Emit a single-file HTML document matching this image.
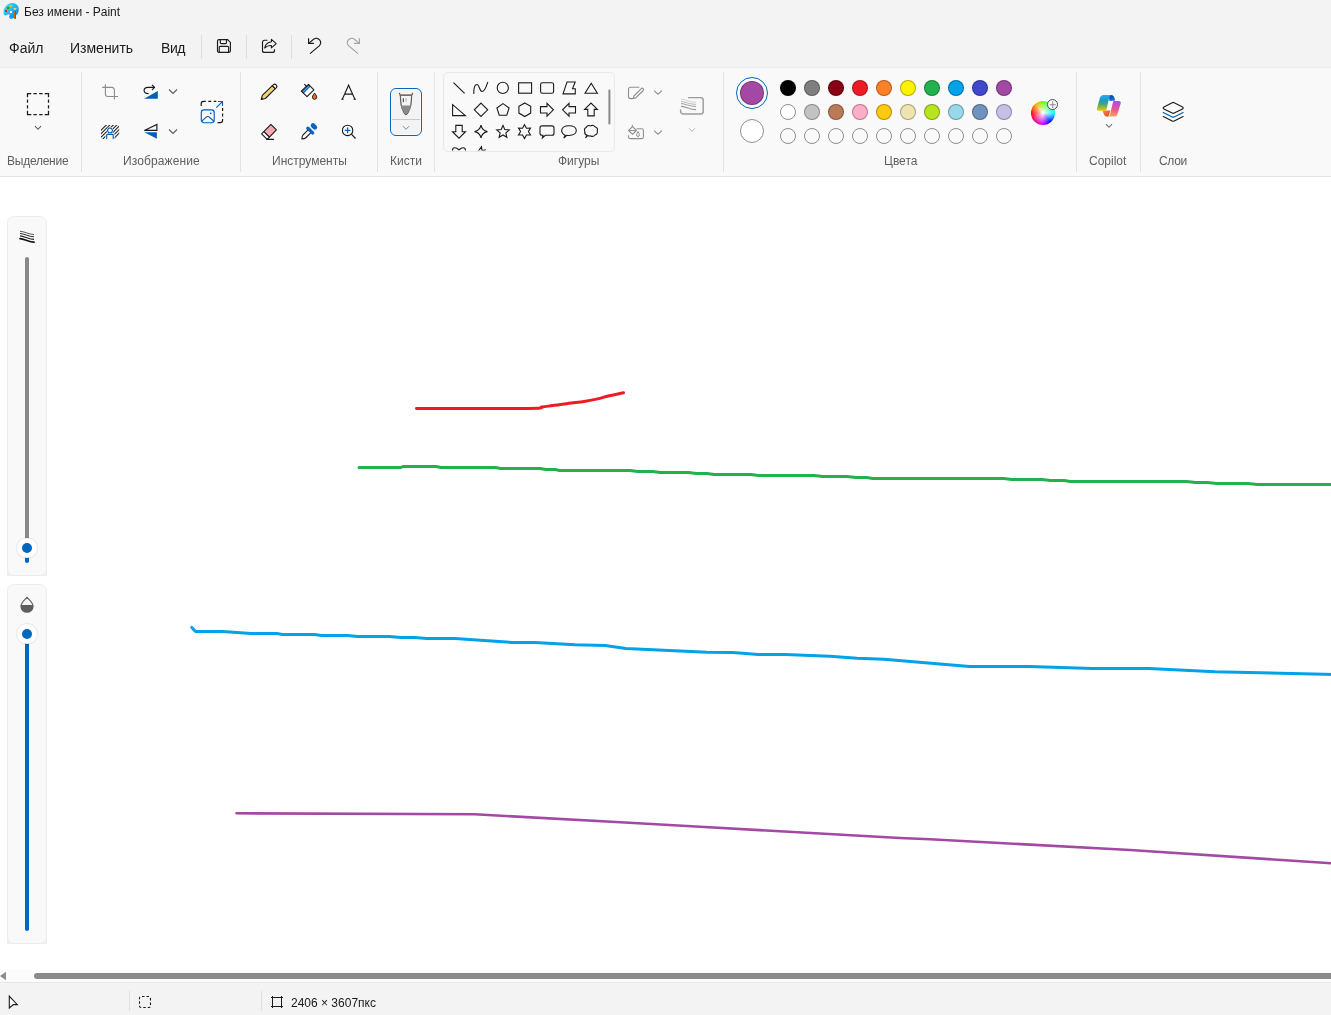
<!DOCTYPE html>
<html><head><meta charset="utf-8">
<style>
*{box-sizing:border-box;margin:0;padding:0}
html,body{width:1331px;height:1015px;overflow:hidden;background:#f3f3f3;font-family:"Liberation Sans",sans-serif;color:#1b1b1b}
.a{position:absolute}
.t{position:absolute;white-space:nowrap;line-height:normal;will-change:transform}
svg{position:absolute;overflow:visible}
.lbl{font-size:12px;color:#5f5f5f}
.sep{position:absolute;width:1px;background:#e3e3e3}
.msep{position:absolute;width:1px;background:#dedede;top:35px;height:24px}
.sw{position:absolute;width:16px;height:16px;border-radius:50%;border:1px solid rgba(0,0,0,0.32)}
</style></head><body>

<!-- title bar -->
<div id="title">
  <span class="t m" style="left:24px;top:5px;font-size:12px;color:#1a1a1a">Без имени - Paint</span>
</div>

<!-- menu bar -->
<div id="menu">
  <span class="t m" style="left:9px;top:40px;font-size:14px">Файл</span>
  <span class="t m" style="left:70px;top:40px;font-size:14px">Изменить</span>
  <span class="t m" style="left:161px;top:40px;font-size:14px;letter-spacing:-0.4px">Вид</span>
  <div class="msep" style="left:201px"></div>
  <div class="msep" style="left:246px"></div>
  <div class="msep" style="left:291px"></div>
</div>


<!-- app icon -->
<svg style="left:0;top:0" width="24" height="22" viewBox="0 0 24 22">
<defs><linearGradient id="pal" x1="0" y1="0" x2="1" y2="1"><stop offset="0" stop-color="#4fe0fb"/><stop offset="0.5" stop-color="#22b8f0"/><stop offset="1" stop-color="#0a72d8"/></linearGradient>
<linearGradient id="brh" x1="0" y1="0" x2="1" y2="0"><stop offset="0" stop-color="#c8741c"/><stop offset="1" stop-color="#8a4a10"/></linearGradient></defs>
<path d="M12,3 C16,3 18.8,5.5 18.8,9.5 C18.8,13 17,14.5 15.5,16 C14,17.5 13,19 11,18.8 C9.2,18.6 8.8,17 9.4,15.5 C9.8,14.5 9,13.8 8,14.5 C6.5,15.8 4.5,16 3.8,14.5 C3,12.5 3.5,9 5.5,6.5 C7.2,4.3 9.5,3 12,3 Z" fill="url(#pal)"/>
<rect x="10" y="5" width="2" height="2" fill="#ffc000"/>
<rect x="7" y="7" width="2" height="2" fill="#1e9a1e"/>
<rect x="5" y="10" width="2" height="2" fill="#f02000"/>
<rect x="10" y="11" width="2" height="2" fill="#fff"/>
<path d="M13,8 L17,8 L15.5,10 L14.5,10 Z" fill="#f3c98f"/>
<rect x="14" y="11" width="2" height="8" rx="0.8" fill="url(#brh)"/>
</svg>
<!-- save -->
<svg style="left:216px;top:38px" width="16" height="16" viewBox="0 0 16 16">
<path d="M3,1.6 H11.6 L14.4,4.4 V12.9 A1.5,1.5 0 0 1 12.9,14.4 H3 A1.5,1.5 0 0 1 1.5,12.9 V3 A1.5,1.5 0 0 1 3,1.6 Z" fill="none" stroke="#1b1b1b" stroke-width="1.15"/>
<path d="M4.3,1.8 V4.6 A1,1 0 0 0 5.3,5.6 H9.5 A1,1 0 0 0 10.5,4.6 V1.8" fill="none" stroke="#1b1b1b" stroke-width="1.15"/>
<path d="M3.2,14.3 V9.3 A1,1 0 0 1 4.2,8.3 H11.6 A1,1 0 0 1 12.6,9.3 V14.3" fill="none" stroke="#1b1b1b" stroke-width="1.15"/>
</svg>
<!-- share -->
<svg style="left:261px;top:38px" width="17" height="16" viewBox="0 0 17 16">
<path d="M6.5,2.2 H3.5 A2,2 0 0 0 1.5,4.2 V12.4 A2,2 0 0 0 3.5,14.4 H11.5 A2,2 0 0 0 13.5,12.4 V11.2" fill="none" stroke="#1b1b1b" stroke-width="1.15"/>
<path d="M10.4,1.3 L15.2,5.6 L10.4,9.9 V7.6 C7.6,7.4 5.3,8.3 3.7,10 C4.1,6.6 6.5,4.3 10.4,3.7 Z" fill="none" stroke="#1b1b1b" stroke-width="1.1" stroke-linejoin="round"/>
</svg>
<!-- undo -->
<svg style="left:306px;top:36px" width="18" height="20" viewBox="0 0 18 20">
<path d="M2.6,2.2 V7.4 H7.9" fill="none" stroke="#1b1b1b" stroke-width="1.15"/>
<path d="M2.9,7.1 L7.6,3.3 C9.6,1.6 12.3,2.1 13.8,4.2 C15.2,6.1 14.9,8.2 13.2,9.9 L4.3,17.4" fill="none" stroke="#1b1b1b" stroke-width="1.15" stroke-linecap="round"/>
</svg>
<!-- redo -->
<svg style="left:346px;top:36px" width="18" height="20" viewBox="0 0 18 20">
<g transform="translate(16,0) scale(-1,1)">
<path d="M2.6,2.2 V7.4 H7.9" fill="none" stroke="#a3a3a3" stroke-width="1.15"/>
<path d="M2.9,7.1 L7.6,3.3 C9.6,1.6 12.3,2.1 13.8,4.2 C15.2,6.1 14.9,8.2 13.2,9.9 L4.3,17.4" fill="none" stroke="#a3a3a3" stroke-width="1.15" stroke-linecap="round"/>
</g>
</svg>

<!-- ribbon -->
<div id="ribbon" class="a" style="left:0;top:67px;width:1331px;height:110px;background:#f9f9f9;border-top:1px solid #ebebeb;border-bottom:1px solid #e5e5e5">
</div>


<!-- selection -->
<svg style="left:26px;top:92px" width="24" height="24" viewBox="0 0 24 24">
<path d="M1.5,5.3 V1.5 H5.3 M7.4,1.5 H10.8 M13.2,1.5 H16.6 M18.7,1.5 H22.5 V5.3 M22.5,7.4 V10.8 M22.5,13.2 V16.6 M22.5,18.7 V22.5 H18.7 M16.6,22.5 H13.2 M10.8,22.5 H7.4 M5.3,22.5 H1.5 V18.7 M1.5,16.6 V13.2 M1.5,10.8 V7.4" fill="none" stroke="#1b1b1b" stroke-width="1.25" stroke-linecap="butt" stroke-linejoin="miter"/>
</svg>
<svg style="left:34px;top:125px" width="8" height="6" viewBox="0 0 8 6"><path d="M1,1.2 L4,4.3 L7,1.2" fill="none" stroke="#5c5c5c" stroke-width="1.1"/></svg>
<!-- crop -->
<svg style="left:101px;top:83px" width="18" height="18" viewBox="0 0 18 18">
<path d="M4.4,1.2 V11 A2.5,2.5 0 0 0 6.9,13.5 H17" fill="none" stroke="#8c8c8c" stroke-width="1.1"/>
<path d="M1.1,4.4 H10.9 A2.5,2.5 0 0 1 13.4,6.9 V16.5" fill="none" stroke="#8c8c8c" stroke-width="1.1"/>
</svg>
<!-- rotate -->
<svg style="left:143px;top:84px" width="17" height="16" viewBox="0 0 17 16">
<path d="M11.6,3.4 H5 C2.7,3.4 1.1,4.8 1.1,6.5 C1.1,8.3 2.7,9.6 5.6,9.6" fill="none" stroke="#1b1b1b" stroke-width="1.15"/>
<path d="M9.3,1.1 L11.6,3.4 L9.3,5.7" fill="none" stroke="#1b1b1b" stroke-width="1.15" stroke-linecap="round" stroke-linejoin="round"/>
<path d="M1,14.8 L14.8,7 V14.8 Z" fill="#005fb8"/>
</svg>
<svg style="left:168px;top:88px" width="10" height="7" viewBox="0 0 10 7"><path d="M1,1.5 L5,5.5 L9,1.5" fill="none" stroke="#5c5c5c" stroke-width="1.1"/></svg>
<!-- flip -->
<svg style="left:143px;top:123px" width="16" height="17" viewBox="0 0 16 17">
<path d="M1.3,7.4 L13.9,1.4 V7.4 Z" fill="none" stroke="#1b1b1b" stroke-width="1.15" stroke-linejoin="miter"/>
<path d="M1.3,9.2 H13.9 V15.8 Z" fill="#005fb8"/>
</svg>
<svg style="left:168px;top:128px" width="10" height="7" viewBox="0 0 10 7"><path d="M1,1.5 L5,5.5 L9,1.5" fill="none" stroke="#5c5c5c" stroke-width="1.1"/></svg>
<!-- remove bg -->
<svg style="left:100px;top:124px" width="20" height="16" viewBox="0 0 20 16">
<defs>
<clipPath id="rbr"><rect x="1" y="1" width="18.2" height="14" rx="2"/></clipPath>
<mask id="rbm" maskUnits="userSpaceOnUse" x="0" y="0" width="20" height="16">
<rect x="0" y="0" width="20" height="16" fill="#fff"/>
<path d="M6.3,6.4 L8,3 H12 L13.7,6.4 L12,9.8 H8 Z" fill="#000"/>
<path d="M5.4,16 V10.9 A1.5,1.5 0 0 1 6.9,9.3 H13.1 A1.5,1.5 0 0 1 14.6,10.9 V16 Z" fill="#000"/>
</mask>
</defs>
<g clip-path="url(#rbr)"><g mask="url(#rbm)">
<path d="M-9.70,17 L7.30,0 M-6.20,17 L10.80,0 M-2.70,17 L14.30,0 M0.80,17 L17.80,0 M4.30,17 L21.30,0 M7.80,17 L24.80,0 M11.30,17 L28.30,0" stroke="#2a2a2a" stroke-width="1.1"/>
</g></g>
<path d="M7.4,6.4 L8.65,4.1 H11.35 L12.6,6.4 L11.35,8.7 H8.65 Z" fill="none" stroke="#005fb8" stroke-width="1.1" stroke-linejoin="round"/>
<path d="M6.7,14.6 V11.3 A0.9,0.9 0 0 1 7.6,10.4 H12.3 A0.9,0.9 0 0 1 13.2,11.3 V14.6" fill="none" stroke="#005fb8" stroke-width="1.1" stroke-linecap="round"/>
</svg>
<!-- resize -->
<svg style="left:200px;top:100px" width="24" height="24" viewBox="0 0 24 24">
<path d="M1.2,6 V3.7 A2.3,2.3 0 0 1 3.5,1.4 H5.8" fill="none" stroke="#1b1b1b" stroke-width="1.2"/>
<path d="M8.3,1.4 H11.3 M13.8,1.4 H16.3" fill="none" stroke="#1b1b1b" stroke-width="1.2"/>
<path d="M22.6,8 V11 M22.6,13.5 V16.5" fill="none" stroke="#1b1b1b" stroke-width="1.2"/>
<path d="M22.6,19 V20.3 A2.3,2.3 0 0 1 20.3,22.6 H17.5" fill="none" stroke="#1b1b1b" stroke-width="1.2"/>
<rect x="1.3" y="9.8" width="12.9" height="12.9" rx="2.6" fill="none" stroke="#005fb8" stroke-width="1.15"/>
<path d="M1.8,21.2 L6,17.3 A2.4,2.4 0 0 1 9.6,17.3 L13.6,21" fill="none" stroke="#005fb8" stroke-width="1.15"/>
<circle cx="10.7" cy="13.3" r="0.9" fill="#005fb8"/>
<path d="M16.4,7.6 L22.4,1.6 M18,1.5 H22.5 V6" fill="none" stroke="#005fb8" stroke-width="1.15"/>
</svg>


<!-- pencil -->
<svg style="left:260px;top:83px" width="18" height="18" viewBox="0 0 18 18">
<path d="M1.3,16.5 L2.3,12.4 L12.3,2.6 L15.3,5.6 L5.4,15.5 Z" fill="#f1cf7e" stroke="#1b1b1b" stroke-width="1.1" stroke-linejoin="round"/>
<path d="M12.3,2.6 L13.2,1.8 A2.1,2.1 0 0 1 16.2,4.8 L15.3,5.6 Z" fill="#fff" stroke="#1b1b1b" stroke-width="1.1" stroke-linejoin="round"/>
<path d="M1.3,16.5 L2.6,15.2" stroke="#1b1b1b" stroke-width="1.6"/>
</svg>
<!-- fill -->
<svg style="left:300px;top:83px" width="19" height="18" viewBox="0 0 19 18">
<path d="M1.5,8.2 L3.5,10.4 L10.6,3.4 L8.5,1.4 Z" fill="#0a63c4"/>
<path d="M2.5,9.3 L9.6,2.4" stroke="#9cc3ee" stroke-width="0.7"/>
<path d="M8.5,1.3 L13.9,6.9 L7,13.6 L1.3,8.2 Z" fill="none" stroke="#1b1b1b" stroke-width="1.1" stroke-linejoin="round"/>
<path d="M4.3,1.2 L6.6,3.5" stroke="#1b1b1b" stroke-width="1.1"/>
<path d="M14.6,10.1 C15.5,11.5 16.8,12.6 16.8,14.1 A2.2,2.2 0 0 1 12.4,14.1 C12.4,12.6 13.7,11.5 14.6,10.1 Z" fill="#f26522" stroke="#1b1b1b" stroke-width="0.9" stroke-linejoin="round"/>
</svg>
<!-- text A -->
<svg style="left:341px;top:84px" width="17" height="17" viewBox="0 0 17 17">
<path d="M1.3,15.3 L7.6,1.2 L13.9,15.3 M3.6,10.1 H11.6" fill="none" stroke="#1b1b1b" stroke-width="1.1" stroke-linejoin="miter"/>
<path d="M0.3,15.3 H2.6 M12.6,15.3 H14.9" stroke="#1b1b1b" stroke-width="1.1"/>
</svg>
<!-- eraser -->
<svg style="left:260px;top:123px" width="18" height="18" viewBox="0 0 18 18">
<path d="M10.9,1.3 L16.4,6.9 L9.4,14.2 L3.8,8.6 Z" fill="#f4aaae" stroke="#1b1b1b" stroke-width="1.1" stroke-linejoin="round"/>
<path d="M3.8,8.6 L9.4,14.2 L7.2,16.4 L1.6,10.8 Z" fill="#fff" stroke="#1b1b1b" stroke-width="1.1" stroke-linejoin="round"/>
<path d="M6.6,16.4 H13.6" stroke="#1b1b1b" stroke-width="1.1" stroke-linecap="round"/>
</svg>
<!-- picker -->
<svg style="left:300px;top:123px" width="19" height="18" viewBox="0 0 19 18">
<path d="M8.4,6.6 L3.3,11.7 C2.3,12.7 1.9,14.3 1.9,15.9 C3.5,15.9 5.1,15.5 6.1,14.5 L11.2,9.4 Z" fill="#fff" stroke="#1b1b1b" stroke-width="1.1" stroke-linejoin="round"/>
<path d="M7.9,5.2 L12.6,9.9" stroke="#0a63c4" stroke-width="3.4" stroke-linecap="round"/>
<path d="M13,2.5 L14.9,4.4" stroke="#0a63c4" stroke-width="4.6" stroke-linecap="round"/>
</svg>
<!-- zoom -->
<svg style="left:341px;top:124px" width="17" height="17" viewBox="0 0 17 17">
<circle cx="6.6" cy="6.4" r="5.2" fill="none" stroke="#1b1b1b" stroke-width="1.1"/>
<path d="M10.4,10.2 L14.5,14.5" stroke="#1b1b1b" stroke-width="1.2"/>
<path d="M6.6,3.6 V9.2 M3.8,6.4 H9.4" stroke="#0a63c4" stroke-width="1.3"/>
</svg>


<!-- brush button -->
<div class="a" style="left:390px;top:88px;width:32px;height:48px;border-radius:6px;border:1.5px solid #0067c0;background:#f3f3f3;box-shadow:inset 0 0 0 1px #fff"></div>
<div class="a" style="left:392px;top:119px;width:28px;height:1px;background:#c9c9c9"></div>
<svg style="left:398px;top:92px" width="16" height="24" viewBox="0 0 16 24">
<path d="M1.4,1.3 C1.9,2.3 2.4,3.4 2.5,4.8 M14.6,1.3 C14.1,2.3 13.6,3.4 13.5,4.8" fill="none" stroke="#5a5a5a" stroke-width="1.2" stroke-linecap="round"/>
<rect x="2" y="2.3" width="12" height="1.7" fill="#6e6e6e"/>
<path d="M2.5,5.2 C2.5,10 2.8,14 5,18.5 C6,20.8 7.2,22.6 8,22.6 C8.8,22.6 10,20.8 11,18.5 C13.2,14 13.5,10 13.5,5.2" fill="none" stroke="#5a5a5a" stroke-width="1.2"/>
<path d="M2.9,13.8 C5.5,13.3 10.5,13.3 13.1,13.8 C12.8,15.6 12.2,17.2 11,18.5 C10,20.8 8.8,22.3 8,22.3 C7.2,22.3 6,20.8 5,18.5 C3.8,17.2 3.2,15.6 2.9,13.8 Z" fill="#8a8a8a"/>
<path d="M5.3,6.2 V10.2" stroke="#3a3a3a" stroke-width="1"/>
<path d="M8,6.2 V9.4" stroke="#a0a0a0" stroke-width="1"/>
</svg>
<svg style="left:402px;top:125px" width="8" height="6" viewBox="0 0 8 6"><path d="M1,1.2 L4,4.3 L7,1.2" fill="none" stroke="#8a8a8a" stroke-width="1"/></svg>


<!-- shapes gallery -->
<div class="a" style="left:443px;top:72px;width:172px;height:80px;border-radius:5px;border:1px solid #e8e8e8;background:#f9f9f9"></div>
<svg style="left:0;top:0" width="1331" height="200" viewBox="0 0 1331 200">
<defs><clipPath id="galc"><rect x="444" y="73" width="170" height="77.5"/></clipPath></defs>
<g clip-path="url(#galc)">
<path d="M453.5,82.6 L464.6,93.4" fill="none" stroke="#1b1b1b" stroke-width="1.1" stroke-linejoin="miter"/>
<path d="M473.8,93.5 C473.5,89 474.5,84.5 477,84.5 C479.5,84.5 479.5,91.5 482,91.5 C484.5,91.5 486.5,86 487.7,82.3" fill="none" stroke="#1b1b1b" stroke-width="1.1" stroke-linejoin="miter" stroke-linecap="round"/>
<circle cx="502.8" cy="87.9" r="5.6" fill="none" stroke="#1b1b1b" stroke-width="1.1" stroke-linejoin="miter"/>
<rect x="518.6" y="82.8" width="13" height="10.4" fill="none" stroke="#1b1b1b" stroke-width="1.1" stroke-linejoin="miter"/>
<rect x="540.6" y="82.8" width="13" height="10.4" rx="1.8" fill="none" stroke="#1b1b1b" stroke-width="1.1" stroke-linejoin="miter"/>
<path d="M567,82 H575.2 L572.5,88.8 H575.3 V93.9 H563 Z" fill="none" stroke="#1b1b1b" stroke-width="1.1" stroke-linejoin="miter"/>
<path d="M591.2,83.2 L597.4,93.3 H585 Z" fill="none" stroke="#1b1b1b" stroke-width="1.1" stroke-linejoin="miter"/>
<path d="M452.6,104.6 V115.6 H465.4 Z" fill="none" stroke="#1b1b1b" stroke-width="1.1" stroke-linejoin="miter"/>
<path d="M481,103.1 L487.7,109.8 L481,116.5 L474.3,109.8 Z" fill="none" stroke="#1b1b1b" stroke-width="1.1" stroke-linejoin="miter"/>
<path d="M503.00,103.60 L509.09,108.02 L506.76,115.18 L499.24,115.18 L496.91,108.02 Z" fill="none" stroke="#1b1b1b" stroke-width="1.1" stroke-linejoin="miter"/>
<path d="M524.80,102.90 L530.69,106.30 L530.69,113.10 L524.80,116.50 L518.91,113.10 L518.91,106.30 Z" fill="none" stroke="#1b1b1b" stroke-width="1.1" stroke-linejoin="miter"/>
<path d="M540.5,106.6 H547 V103.4 L553.4,109.8 L547,116.2 V113 H540.5 Z" fill="none" stroke="#1b1b1b" stroke-width="1.1" stroke-linejoin="miter"/>
<path d="M575.5,106.6 H569 V103.4 L562.6,109.8 L569,116.2 V113 H575.5 Z" fill="none" stroke="#1b1b1b" stroke-width="1.1" stroke-linejoin="miter"/>
<path d="M587.8,115.9 V109.4 H584.6 L591,103.1 L597.4,109.4 H594.2 V115.9 Z" fill="none" stroke="#1b1b1b" stroke-width="1.1" stroke-linejoin="miter"/>
<path d="M455.8,125.4 H462.2 V131.7 H465.5 L459,138.2 L452.5,131.7 H455.8 Z" fill="none" stroke="#1b1b1b" stroke-width="1.1" stroke-linejoin="miter"/>
<path d="M481,125.2 C481.8,129.2 483.2,130.8 487.4,131.6 C483.2,132.4 481.8,134 481,138 C480.2,134 478.8,132.4 474.6,131.6 C478.8,130.8 480.2,129.2 481,125.2 Z" fill="none" stroke="#1b1b1b" stroke-width="1.1" stroke-linejoin="miter"/>
<path d="M503.00,125.40 L504.76,129.57 L509.28,129.96 L505.85,132.93 L506.88,137.34 L503.00,135.00 L499.12,137.34 L500.15,132.93 L496.72,129.96 L501.24,129.57 Z" fill="none" stroke="#1b1b1b" stroke-width="1.1" stroke-linejoin="miter"/>
<path d="M524.50,124.70 L526.45,128.22 L530.48,128.15 L528.40,131.60 L530.48,135.05 L526.45,134.98 L524.50,138.50 L522.55,134.98 L518.52,135.05 L520.60,131.60 L518.52,128.15 L522.55,128.22 Z" fill="none" stroke="#1b1b1b" stroke-width="1.1" stroke-linejoin="miter"/>
<path d="M542,125.9 H552 A2,2 0 0 1 554,127.9 V133.3 A2,2 0 0 1 552,135.3 H545.3 L542.4,138 L543,135.3 H542 A2,2 0 0 1 540,133.3 V127.9 A2,2 0 0 1 542,125.9 Z" fill="none" stroke="#1b1b1b" stroke-width="1.1" stroke-linejoin="miter"/>
<path d="M565.2,135.2 C562.5,134.2 561.7,132.4 561.7,130.6 C561.7,127.7 564.8,125.7 569,125.7 C573.2,125.7 576.3,127.7 576.3,130.6 C576.3,133.5 573.2,135.5 569,135.5 C568.2,135.5 567.5,135.4 566.8,135.3 L563.8,138 Z" fill="none" stroke="#1b1b1b" stroke-width="1.1" stroke-linejoin="miter"/>
<path d="M587,135.2 C585,134.5 584.5,133 584.8,131.5 C584.2,130 584.6,128.2 586.2,127.5 C587,125.8 589,125.3 590.5,125.9 C592,125 594.5,125.4 595.3,127 C597,127.6 597.8,129.5 597.3,131 C597.8,132.8 596.8,134.6 595,135 C594,136.3 592,136.6 590.6,135.9 C589.5,136.2 588.3,136 587.6,135.6 L585.5,138 Z" fill="none" stroke="#1b1b1b" stroke-width="1.1" stroke-linejoin="miter"/>
<path d="M459,150 C456,147 452.5,147 452.5,150.5 C452.5,154 456,157 459,159 C462,157 465.5,154 465.5,150.5 C465.5,147 462,147 459,150 Z" fill="none" stroke="#1b1b1b" stroke-width="1.1" stroke-linejoin="miter"/>
<path d="M477,153 L481.5,146.8 L482,150.6 L485,150 L480,158" fill="none" stroke="#1b1b1b" stroke-width="1.1" stroke-linejoin="miter"/>
</g>
<rect x="608.4" y="89.5" width="2" height="35" rx="1" fill="#8a8a8a"/>
</svg>


<!-- outline / fill / size (disabled gray) -->
<svg style="left:627px;top:86px" width="18" height="14" viewBox="0 0 18 14">
<path d="M12.4,1.2 H3.5 A2,2 0 0 0 1.5,3.2 V10.6 A2,2 0 0 0 3.5,12.6 H6" fill="none" stroke="#8f8f8f" stroke-width="1.1"/>
<path d="M6.3,12.4 L6.9,10 L14.3,2.6 A1.3,1.3 0 0 1 16.2,4.5 L8.8,11.9 Z" fill="none" stroke="#8f8f8f" stroke-width="1.1" stroke-linejoin="round"/>
</svg>
<svg style="left:653px;top:89px" width="10" height="7" viewBox="0 0 10 7"><path d="M1.1,1.6 L5,5.2 L8.9,1.6" fill="none" stroke="#8c8c8c" stroke-width="1.05"/></svg>
<svg style="left:627px;top:124px" width="18" height="16" viewBox="0 0 18 16">
<path d="M9.5,4.8 H14.8 A1.6,1.6 0 0 1 16.4,6.4 V13 A1.6,1.6 0 0 1 14.8,14.6 H3.1 A1.6,1.6 0 0 1 1.5,13 V11.3" fill="none" stroke="#8f8f8f" stroke-width="1.1"/>
<path d="M5.5,2.6 L9.4,6.5 L5.5,10.4 L1.6,6.5 Z" fill="none" stroke="#8f8f8f" stroke-width="1.1" stroke-linejoin="round"/>
<path d="M2,6.6 H9" stroke="#8f8f8f" stroke-width="1"/>
<path d="M5.3,0.9 V3" stroke="#8f8f8f" stroke-width="1"/>
<path d="M11,7.6 C11.8,8.8 12.4,9.8 12.4,10.9 A1.4,1.6 0 0 1 9.6,10.9 C9.6,9.8 10.2,8.8 11,7.6 Z" fill="none" stroke="#8f8f8f" stroke-width="1"/>
</svg>
<svg style="left:653px;top:129px" width="10" height="7" viewBox="0 0 10 7"><path d="M1.1,1.6 L5,5.2 L8.9,1.6" fill="none" stroke="#8c8c8c" stroke-width="1.05"/></svg>
<svg style="left:679px;top:96px" width="26" height="20" viewBox="0 0 26 20">
<path d="M9.6,1.6 H21.6 A2.6,2.6 0 0 1 24.2,4.2 V15.4 A2.6,2.6 0 0 1 21.6,18 H4.2 A2.6,2.6 0 0 1 1.6,15.4 V14" fill="none" stroke="#9a9a9a" stroke-width="1.4" stroke-linecap="round"/>
<path d="M2,3.2 C6,3.2 11,6.3 17,6.3" fill="none" stroke="#b8b8b8" stroke-width="0.6"/>
<path d="M2,5.5 C6,5.5 11,8.4 17,8.4" fill="none" stroke="#a8a8a8" stroke-width="0.8"/>
<path d="M2,7.6 C6,7.6 11,10.5 17,10.5" fill="none" stroke="#9c9c9c" stroke-width="1"/>
<path d="M2,10.3 C6,10.3 11,13.6 17,13.6" fill="none" stroke="#959595" stroke-width="1.2"/>
</svg>
<svg style="left:688px;top:127px" width="8" height="6" viewBox="0 0 8 6"><path d="M1,1.2 L4,4.3 L7,1.2" fill="none" stroke="#b8b8b8" stroke-width="1"/></svg>

<!-- colors -->
<div class="a" style="left:736px;top:77px;width:32px;height:32px;border-radius:50%;border:1.5px solid #0067c0"></div>
<div class="a" style="left:740px;top:81px;width:24px;height:24px;border-radius:50%;background:#a349a4;border:1px solid rgba(0,0,0,0.28)"></div>
<div class="a" style="left:740px;top:119px;width:24px;height:24px;border-radius:50%;background:#fff;border:1px solid #8f8f8f"></div>
<div class="sw" style="left:780px;top:80px;background:#000000;border-color:rgba(0,0,0,0.3)"></div>
<div class="sw" style="left:804px;top:80px;background:#7f7f7f;border-color:rgba(0,0,0,0.3)"></div>
<div class="sw" style="left:828px;top:80px;background:#880015;border-color:rgba(0,0,0,0.3)"></div>
<div class="sw" style="left:852px;top:80px;background:#ed1c24;border-color:rgba(0,0,0,0.3)"></div>
<div class="sw" style="left:876px;top:80px;background:#ff7f27;border-color:rgba(0,0,0,0.3)"></div>
<div class="sw" style="left:900px;top:80px;background:#fff200;border-color:rgba(0,0,0,0.3)"></div>
<div class="sw" style="left:924px;top:80px;background:#22b14c;border-color:rgba(0,0,0,0.3)"></div>
<div class="sw" style="left:948px;top:80px;background:#00a2e8;border-color:rgba(0,0,0,0.3)"></div>
<div class="sw" style="left:972px;top:80px;background:#3f48cc;border-color:rgba(0,0,0,0.3)"></div>
<div class="sw" style="left:996px;top:80px;background:#a349a4;border-color:rgba(0,0,0,0.3)"></div>
<div class="sw" style="left:780px;top:104px;background:#ffffff;border-color:#8f8f8f"></div>
<div class="sw" style="left:804px;top:104px;background:#c3c3c3;border-color:rgba(0,0,0,0.3)"></div>
<div class="sw" style="left:828px;top:104px;background:#b97a57;border-color:rgba(0,0,0,0.3)"></div>
<div class="sw" style="left:852px;top:104px;background:#ffaec9;border-color:rgba(0,0,0,0.3)"></div>
<div class="sw" style="left:876px;top:104px;background:#ffc90e;border-color:rgba(0,0,0,0.3)"></div>
<div class="sw" style="left:900px;top:104px;background:#efe4b0;border-color:rgba(0,0,0,0.3)"></div>
<div class="sw" style="left:924px;top:104px;background:#b5e61d;border-color:rgba(0,0,0,0.3)"></div>
<div class="sw" style="left:948px;top:104px;background:#99d9ea;border-color:rgba(0,0,0,0.3)"></div>
<div class="sw" style="left:972px;top:104px;background:#7092be;border-color:rgba(0,0,0,0.3)"></div>
<div class="sw" style="left:996px;top:104px;background:#c8bfe7;border-color:rgba(0,0,0,0.3)"></div>
<div class="sw" style="left:780px;top:128px;border-color:#8f8f8f"></div>
<div class="sw" style="left:804px;top:128px;border-color:#8f8f8f"></div>
<div class="sw" style="left:828px;top:128px;border-color:#8f8f8f"></div>
<div class="sw" style="left:852px;top:128px;border-color:#8f8f8f"></div>
<div class="sw" style="left:876px;top:128px;border-color:#8f8f8f"></div>
<div class="sw" style="left:900px;top:128px;border-color:#8f8f8f"></div>
<div class="sw" style="left:924px;top:128px;border-color:#8f8f8f"></div>
<div class="sw" style="left:948px;top:128px;border-color:#8f8f8f"></div>
<div class="sw" style="left:972px;top:128px;border-color:#8f8f8f"></div>
<div class="sw" style="left:996px;top:128px;border-color:#8f8f8f"></div>
<div class="a" style="left:1031px;top:101px;width:24px;height:24px;border-radius:50%;background:radial-gradient(circle, rgba(255,255,255,1) 0%, rgba(255,255,255,0.6) 25%, rgba(255,255,255,0) 70%), conic-gradient(from 0deg, hsl(95,100%,50%), hsl(180,100%,50%) 90deg, hsl(240,100%,50%) 140deg, hsl(290,100%,50%) 185deg, hsl(360,100%,50%) 270deg, hsl(40,100%,50%) 320deg, hsl(95,100%,50%) 360deg)"></div>
<div class="a" style="left:1046.5px;top:98.5px;width:11.5px;height:11.5px;border-radius:50%;background:#fff;border:1px solid #4a4a4a"></div>
<svg style="left:1046.5px;top:98.5px" width="12" height="12" viewBox="0 0 12 12"><path d="M5.75,2.6 V8.9 M2.6,5.75 H8.9" stroke="#8a8a8a" stroke-width="1.1"/></svg>

<!-- copilot -->
<svg style="left:1096px;top:94px" width="26" height="24" viewBox="0 0 26 24">
<defs>
<linearGradient id="cpa" x1="0" y1="0" x2="0" y2="1"><stop offset="0" stop-color="#1db0f2"/><stop offset="0.35" stop-color="#1f98c8"/><stop offset="0.6" stop-color="#4aa870"/><stop offset="1" stop-color="#f2c400"/></linearGradient>
<linearGradient id="cpb" x1="0.3" y1="0" x2="0.2" y2="1"><stop offset="0" stop-color="#a94ff0"/><stop offset="0.5" stop-color="#ee5490"/><stop offset="1" stop-color="#ffa454"/></linearGradient>
<linearGradient id="cpc" x1="0" y1="0" x2="0.6" y2="1"><stop offset="0" stop-color="#0a36c8"/><stop offset="1" stop-color="#1170e0"/></linearGradient>
<linearGradient id="cpd" x1="0" y1="0" x2="1" y2="1"><stop offset="0" stop-color="#ff8a44"/><stop offset="1" stop-color="#e2402e"/></linearGradient>
</defs>
<path d="M6.5,16.4 H14.4 L12.4,22.5 H10.6 C9.2,22.5 8.3,21.6 7.8,20.1 Z" fill="url(#cpd)"/>
<path d="M12.5,0.9 H15.6 C17.5,0.9 18.4,3 19.2,6.5 L13.6,7 Z" fill="url(#cpc)"/>
<path d="M7.5,0.9 H15.4 C13.9,1.2 13.2,3.5 12.8,5.5 L10.2,16.7 H2.8 C1.3,16.7 0.6,15.7 1,14.3 L3.8,4.3 C4.4,2.2 5.6,0.9 7.5,0.9 Z" fill="url(#cpa)"/>
<path d="M17.8,7.1 H23 C24.4,7.1 25.1,8.3 24.7,9.6 L21.4,20.3 C20.9,21.8 19.9,22.5 18.5,22.5 H12.2 C13.4,22 14,20.6 14.4,19 L16.8,8.8 C17.1,7.7 17.4,7.1 17.8,7.1 Z" fill="url(#cpb)"/>
</svg>
<svg style="left:1105px;top:123px" width="8" height="6" viewBox="0 0 8 6"><path d="M1,1.2 L4,4.3 L7,1.2" fill="none" stroke="#707070" stroke-width="1.1"/></svg>
<!-- layers -->
<svg style="left:1162px;top:101px" width="23" height="22" viewBox="0 0 23 22">
<path d="M10.2,1.7 A2,2 0 0 1 12.2,1.7 L20.5,5.9 A1.1,1.1 0 0 1 20.5,7.9 L12.2,12.1 A2,2 0 0 1 10.2,12.1 L1.9,7.9 A1.1,1.1 0 0 1 1.9,5.9 Z" fill="none" stroke="#1b1b1b" stroke-width="1.15"/>
<path d="M1.3,11.4 L10.2,15.9 A2,2 0 0 0 12.2,15.9 L21.1,11.4" fill="none" stroke="#005fb8" stroke-width="1.15" stroke-linecap="round"/>
<path d="M1.3,15.5 L10.2,20 A2,2 0 0 0 12.2,20 L21.1,15.5" fill="none" stroke="#1b1b1b" stroke-width="1.15" stroke-linecap="round"/>
</svg>

<!-- labels -->
<span class="t lbl m" style="left:7px;top:154px;letter-spacing:-0.25px">Выделение</span>
<span class="t lbl m" style="left:123px;top:154px;letter-spacing:0.12px">Изображение</span>
<span class="t lbl m" style="left:272px;top:154px">Инструменты</span>
<span class="t lbl m" style="left:390px;top:154px">Кисти</span>
<span class="t lbl m" style="left:558px;top:154px">Фигуры</span>
<span class="t lbl m" style="left:884px;top:154px">Цвета</span>
<span class="t lbl m" style="left:1089px;top:154px">Copilot</span>
<span class="t lbl m" style="left:1159px;top:154px;letter-spacing:-0.3px">Слои</span>

<div class="sep" style="left:81px;top:72px;height:100px"></div>
<div class="sep" style="left:240px;top:72px;height:100px"></div>
<div class="sep" style="left:377px;top:72px;height:100px"></div>
<div class="sep" style="left:434px;top:72px;height:100px"></div>
<div class="sep" style="left:723px;top:72px;height:100px"></div>
<div class="sep" style="left:1076px;top:72px;height:100px"></div>
<div class="sep" style="left:1140px;top:72px;height:100px"></div>

<!-- canvas -->
<div id="canvas" class="a" style="left:0;top:177px;width:1331px;height:793px;background:#fff"></div>


<!-- drawn lines -->
<svg class="a" style="left:0;top:0" width="1331" height="1015">
<path d="M416.5,408.5 C435.13,408.50 507.38,408.75 528.3,408.5 C549.22,408.25 537.93,407.50 542,407 C546.07,406.50 549.28,405.95 552.7,405.5 C556.12,405.05 559.40,404.72 562.5,404.3 C565.60,403.88 567.72,403.48 571.3,403 C574.88,402.52 579.60,402.08 584,401.4 C588.40,400.72 593.80,399.77 597.7,398.9 C601.60,398.03 603.10,397.22 607.4,396.2 C611.70,395.18 620.82,393.37 623.5,392.8" fill="none" stroke="#ed1c24" stroke-width="3" stroke-linecap="round" stroke-linejoin="round"/>
<polyline points="359,467.5 401,467.5 403,466.5 436,466.5 441,467.5 495.5,467.5 500.8,468.5 540,468.5 545.8,469.5 555,469.5 559.5,470.5 630,470.5 637.7,471.5 652.7,471.5 660.2,472.5 688.8,472.5 696.3,473.5 706.8,473.5 714.3,474.5 751,474.5 758.5,475.5 814,475.5 823,476.5 847,476.5 856,477.5 866.7,477.5 872.7,478.5 1004,478.5 1011.7,479.5 1041.7,479.5 1050.7,480.5 1064.3,480.5 1070.3,481.5 1186.6,481.5 1195.6,482.5 1207.6,482.5 1216.6,483.5 1248.2,483.5 1257.2,484.5 1335,484.5" fill="none" stroke="#22b14c" stroke-width="3" stroke-linecap="round" stroke-linejoin="round"/>
<polyline points="191.8,627.4 195.5,631.5 222.6,631.5 251,633.5 276.7,633.5 282.7,634.5 314.2,634.5 321.7,635.5 347.3,635.5 357.8,636.5 389,636.5 401,637.5 414.6,637.5 426.6,638.5 455,638.5 512,642.5 534.8,642.5 575,644.8 605,645.5 626,648.5 707,652.3 732.8,652.5 758.3,654.5 785,654.5 830,656.3 857,658.2 884,659.3 969.5,666.5 1029.6,666.5 1092.7,668.5 1149,668.5 1215,671.8 1335,674.5" fill="none" stroke="#00a2e8" stroke-width="3" stroke-linecap="round" stroke-linejoin="round"/>
<polyline points="236.5,813.3 474.6,814.3 625,822.5 700,826.8 900,838 930,839.2 1130,850 1335,863.5" fill="none" stroke="#a349a4" stroke-width="2.6" stroke-linecap="round" stroke-linejoin="round"/>
</svg>


<!-- left sliders -->
<div class="a" style="left:7px;top:566px;width:40px;height:10px;background:#efefef"></div>
<div class="a" style="left:7px;top:216px;width:40px;height:360px;border-radius:7px;background:#f9f9f9;border:1px solid #ececec"></div>
<svg style="left:19px;top:230px" width="16" height="14" viewBox="0 0 16 14">
<path d="M1,1.3 C5,1.3 10,4.5 15,4.5" fill="none" stroke="#333" stroke-width="0.8"/>
<path d="M1,3.5 C5,3.5 10,6.8 15,6.8" fill="none" stroke="#2a2a2a" stroke-width="1.0"/>
<path d="M1,5.9 C5,5.9 10,9.4 15,9.4" fill="none" stroke="#222" stroke-width="1.3"/>
<path d="M1,8.6 C5,8.6 10,12.2 15,12.2" fill="none" stroke="#111" stroke-width="1.7" stroke-linecap="round"/>
</svg>
<div class="a" style="left:25px;top:257px;width:4px;height:283px;border-radius:2px;background:#898989"></div>
<div class="a" style="left:25px;top:552px;width:4px;height:11px;border-radius:2px;background:#0067c0"></div>
<div class="a" style="left:17px;top:538px;width:20px;height:20px;border-radius:50%;background:#fff;box-shadow:0 0 0 1px rgba(0,0,0,0.06)"></div>
<div class="a" style="left:22px;top:543px;width:10px;height:10px;border-radius:50%;background:#0067c0"></div>

<div class="a" style="left:7px;top:934px;width:40px;height:10px;background:#efefef"></div>
<div class="a" style="left:7px;top:584px;width:40px;height:360px;border-radius:7px;background:#f9f9f9;border:1px solid #ececec"></div>
<svg style="left:20px;top:596px" width="14" height="17" viewBox="0 0 14 17">
<path d="M7,1.3 C9,3.8 13,6.3 13,10.2 A6,6 0 0 1 1,10.2 C1,6.3 5,3.8 7,1.3 Z" fill="none" stroke="#5e5e5e" stroke-width="1.25"/>
<path d="M1.1,9 L12.9,9 C13,9.4 13,9.8 13,10.2 A6,6 0 0 1 1,10.2 C1,9.8 1,9.4 1.1,9 Z" fill="#5e5e5e"/>
</svg>
<div class="a" style="left:25px;top:640px;width:4px;height:291px;border-radius:2px;background:#0067c0"></div>
<div class="a" style="left:17px;top:624px;width:20px;height:20px;border-radius:50%;background:#fff;box-shadow:0 0 0 1px rgba(0,0,0,0.06)"></div>
<div class="a" style="left:22px;top:629px;width:10px;height:10px;border-radius:50%;background:#0067c0"></div>

<!-- scrollbar -->
<div class="a" style="left:0;top:970px;width:1331px;height:12px;background:#fbfbfb"></div>
<div class="a" style="left:34px;top:973px;width:1300px;height:6px;border-radius:3px;background:#8a8a8a"></div>

<!-- status bar -->
<div class="a" style="left:0;top:982px;width:1331px;height:33px;background:#f3f3f3;border-top:1px solid #e6e6e6"></div>
<div class="a" style="left:129px;top:991px;width:1px;height:20px;background:#e0e0e0"></div>
<div class="a" style="left:261px;top:991px;width:1px;height:20px;background:#e0e0e0"></div>
<span class="t m" style="left:291px;top:996px;font-size:12px;color:#1a1a1a">2406 × 3607пкс</span>

<!-- status bar icons -->
<svg style="left:8px;top:995px" width="11" height="14" viewBox="0 0 11 14">
<path d="M1.3,1.2 L9.3,9.6 H5.4 L1.3,13 Z" fill="#fff" stroke="#1b1b1b" stroke-width="1.1" stroke-linejoin="miter"/>
</svg>
<svg style="left:138px;top:995px" width="14" height="14" viewBox="0 0 14 14">
<rect x="1.5" y="1.5" width="11" height="11" rx="1.5" fill="none" stroke="#1b1b1b" stroke-width="1.1" stroke-dasharray="2.5,2" stroke-dashoffset="-1"/>
</svg>
<svg style="left:270px;top:995px" width="14" height="14" viewBox="0 0 14 14">
<path d="M2.5,1 V13 M11.5,1 V13 M1,2.5 H13 M1,11.5 H13" stroke="#1b1b1b" stroke-width="1"/>
</svg>
<!-- scroll arrow -->
<svg style="left:0;top:971px" width="8" height="10" viewBox="0 0 8 10"><path d="M0,5 L6,0.8 V9.2 Z" fill="#8a8a8a"/></svg>

</body></html>
